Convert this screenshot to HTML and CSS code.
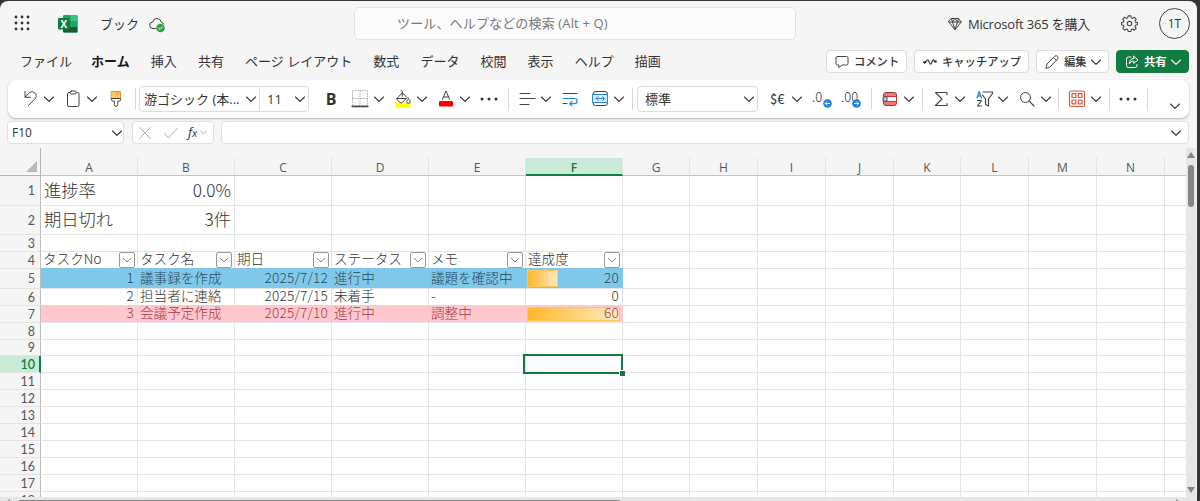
FILE: index.html
```html
<!DOCTYPE html>
<html lang="ja">
<head>
    <meta charset="UTF-8">
    <meta name="viewport" content="width=device-width, initial-scale=1.0">
    <title>ブック</title>
    <link rel="stylesheet" href="styles.css">
</head>
<body>

    <svg class="defs">
        <symbol id="chev" viewBox="0 0 12 12"><path d="M1.5 4 6 8.3 10.5 4"/></symbol>
        <symbol id="dots" viewBox="0 0 20 20"><g fill="#333" stroke="none"><circle cx="3" cy="10" r="1.5"/><circle cx="10" cy="10" r="1.5"/><circle cx="17" cy="10" r="1.5"/></g></symbol>
    </svg>

    <div class="app">
        <header class="titlebar">
            <svg class="waffle" viewBox="0 0 16 16">
                <g fill="#333" stroke="none">
                    <circle cx="2" cy="2" r="1.4"/><circle cx="8" cy="2" r="1.4"/><circle cx="14" cy="2" r="1.4"/>
                    <circle cx="2" cy="8" r="1.4"/><circle cx="8" cy="8" r="1.4"/><circle cx="14" cy="8" r="1.4"/>
                    <circle cx="2" cy="14" r="1.4"/><circle cx="8" cy="14" r="1.4"/><circle cx="14" cy="14" r="1.4"/>
                </g>
            </svg>
            <div class="logo">
                <svg viewBox="0 0 20 18">
                    <g stroke="none">
                        <rect x="5" y="0" width="14.5" height="17.5" rx="1.2" fill="#21a366"/>
                        <path d="M12.5 0h5.8q1.2 0 1.2 1.2V6h-7z" fill="#33c481"/>
                        <path d="M5 6h7.5v6H5z" fill="#107c41"/>
                        <path d="M12.5 6h7v6h-7z" fill="#21a366"/>
                        <path d="M5 12h14.5v4.3q0 1.2-1.2 1.2H6.2Q5 17.5 5 16.3z" fill="#185c37"/>
                        <rect x="0" y="3" width="11.5" height="11.5" rx="1.1" fill="#107c41"/>
                    </g>
                </svg>
                <b>X</b>
            </div>
            <span class="book">ブック</span>
            <svg class="cloud" viewBox="0 0 17 16">
                <path d="M6.5 11.5H4a3.2 3.2 0 0 1-.3-6.400 4.300 4.300 0 0 1 8.500 0 3.200 3.200 0 0 1 2.600 2"/>
                <circle cx="11.500" cy="11" r="4.300" fill="#2ba34a" stroke="none"/>
                <path d="m9.600 11 1.400 1.400 2.500-2.600" stroke="#fff"/>
            </svg>
            <div class="search">ツール、ヘルプなどの検索 (Alt + Q)</div>
            <svg class="gem" viewBox="0 0 14 14"><path d="M3.500 1.500h7L13.200 5 7 12.800.8 5zM.8 5h12.400M4.500 5 7 12.500 9.500 5M3.500 1.500l1 3.500L7 1.500 9.500 5l1-3.500"/></svg>
            <span class="buy">Microsoft 365 を購入</span>
            <svg class="gear" viewBox="0 0 16 16">
                <path d="M6.700.8h2.600l.4 1.900 1.200.5 1.600-1.100 1.800 1.800-1.100 1.600.5 1.200 1.800.4v2.100l-1.800.5-.5 1.200 1.100 1.600-1.800 1.800-1.600-1.100-1.200.5-.4 1.800H6.700l-.4-1.800-1.200-.5-1.600 1.100-1.800-1.800 1.100-1.600-.5-1.200L.5 9.200V7.100l1.800-.4.5-1.200-1.100-1.600 1.800-1.800 1.600 1.100 1.200-.5z"/>
                <circle cx="8" cy="8.100" r="2.100"/>
            </svg>
            <div class="avatar">1T</div>
        </header>

        <nav class="tabs">
            <span>ファイル</span>
            <span class="active">ホーム</span>
            <span>挿入</span>
            <span>共有</span>
            <span>ページ レイアウト</span>
            <span>数式</span>
            <span>データ</span>
            <span>校閲</span>
            <span>表示</span>
            <span>ヘルプ</span>
            <span>描画</span>
            <div class="actions">
                <button class="comment"><svg viewBox="0 0 14 14"><path d="M2.500 1.500h9a1.500 1.500 0 0 1 1.500 1.500v5.500a1.500 1.500 0 0 1-1.500 1.500H7l-3.200 2.600V10H2.500A1.500 1.500 0 0 1 1 8.500V3a1.500 1.500 0 0 1 1.500-1.500z"/></svg>コメント</button>
                <button class="catchup"><svg viewBox="0 0 14 14"><path d="M1.500 7.500c1.500.5 2-3 3.300-2.600S6.300 9.400 7.600 9.200 9 4.800 10.300 5s1 2 2.200 1.600" stroke-width="1.300"/><circle cx="1.600" cy="7.300" r="1.400" fill="#333" stroke="none"/><circle cx="12.600" cy="6.500" r="1.200" fill="#333" stroke="none"/></svg>キャッチアップ</button>
                <button class="edit"><svg viewBox="0 0 14 14"><path d="m1 13 1-4L9.700 1.300a1.700 1.700 0 0 1 2.800 2.800L5 12zM8.500 2.700l2.700 2.700"/></svg>編集<svg class="chev"><use href="#chev"/></svg></button>
                <button class="share"><svg viewBox="0 0 14 14"><path d="M6 2H3.500A2 2 0 0 0 1.500 4v6.500a2 2 0 0 0 2 2H10a2 2 0 0 0 2-2V9.500"/><path d="M8.700 1.200 13 4.800 8.700 8.300V6.200C6.500 6.200 5.300 7 4.300 9c0-3 1.500-5.300 4.400-5.600z"/></svg>共有<svg class="chev"><use href="#chev"/></svg></button>
            </div>
        </nav>

        <div class="ribbon">
            <div class="group g-clip">
                <svg class="ic" viewBox="0 0 20 20"><path d="M5 2.500v5.800h5.500M5.300 8 8.700 4.300c3-3 6.700-1 7.300 1.500.5 2-.5 3.700-2 5L8.500 16.500"/></svg>
                <svg class="chev"><use href="#chev"/></svg>
                <svg class="ic" viewBox="0 0 20 20"><rect x="4.500" y="3.500" width="11.500" height="14" rx="1.500"/><rect x="7.200" y="2" width="6" height="3" rx="1.200" fill="#fff"/></svg>
                <svg class="chev"><use href="#chev"/></svg>
                <svg class="ic" viewBox="0 0 20 20"><path d="M5.500 2.500h9v7h-9z" fill="#ffc65c" stroke="#e8912d"/><path d="M11 2.500v3M13 2.500v2" stroke="#e8912d"/><path d="M5.500 9.500h9v1.200q0 1.500-1.500 1.500h-1.200v3.500a1.600 1.600 0 0 1-3.400 0v-3.500H7q-1.500 0-1.500-1.500z" fill="#fff"/></svg>
            </div>
            <div class="group g-font">
                <div class="box fontname">游ゴシック (本...<svg class="chev"><use href="#chev"/></svg></div>
                <div class="box fontsize">11<svg class="chev"><use href="#chev"/></svg></div>
                <b class="bold">B</b>
                <svg class="ic" viewBox="0 0 20 20"><path d="M2.500 1.500h15v15h-15zM10 1.500v15M2.500 9.500h15" stroke="#aaa" stroke-linecap="butt" stroke-dasharray="1.500 1"/><path d="M2 17.500h16" stroke-width="1.300"/></svg>
                <svg class="chev"><use href="#chev"/></svg>
                <svg class="ic" viewBox="0 0 20 20"><path d="M2.500 13.500h15v4.500h-15z" fill="#ffff00" stroke="none"/><path d="m4 9.300 5.300-5.500 4.800 4.800-5 5q-.9.700-1.800 0L4 10.500q-.5-.6 0-1.200zM4 9.500h9.500M9.300 7V2.500q0-1-1.200-1M15.500 9.500c-1 1.500-1.700 2.300-1.700 3.200a1.700 1.700 0 0 0 3.400 0c0-.9-.7-1.700-1.700-3.200z" fill="#fff"/></svg>
                <svg class="chev"><use href="#chev"/></svg>
                <svg class="ic" viewBox="0 0 20 20"><rect x="3" y="12" width="14" height="5.500" rx="1" fill="#f00" stroke="none"/><path d="M6.300 10.500 10 2l3.700 8.500M7.500 8h5"/></svg>
                <svg class="chev"><use href="#chev"/></svg>
                <svg class="ic"><use href="#dots"/></svg>
            </div>
            <div class="group g-align">
                <svg class="ic" viewBox="0 0 20 20"><path d="M3 4.500h10M3 9.500h15M3 15.500h9"/></svg>
                <svg class="chev"><use href="#chev"/></svg>
                <svg class="ic" viewBox="0 0 20 20"><path d="M3 4.500h14M3 14.500h4"/><path d="M3 9.500h11.500a2.600 2.600 0 0 1 0 5.200H10M12 12.500l-2.300 2.200L12 16.900" stroke="#2b88d8" stroke-width="1.200"/></svg>
                <svg class="ic merge" viewBox="0 0 20 20"><rect x="3" y="2.500" width="14.500" height="14" rx="2.500"/><rect x="3" y="5.500" width="14.500" height="8" fill="#d9ecfa" stroke="#2b88d8"/><path d="M6 9.500h8.500M8 7.500l-2 2 2 2M12.500 7.500l2 2-2 2" stroke="#2b88d8"/></svg>
                <svg class="chev"><use href="#chev"/></svg>
            </div>
            <div class="group g-number">
                <div class="box format">標準<svg class="chev"><use href="#chev"/></svg></div>
                <span class="money">$€</span>
                <svg class="chev"><use href="#chev"/></svg>
                <span class="dec">.0<svg viewBox="0 0 10 10"><circle cx="5" cy="5" r="4.800" fill="#1b84cf" stroke="none"/><path d="M7.500 5h-5M4.500 3l-2 2 2 2" stroke="#fff"/></svg></span>
                <span class="dec">.00<svg viewBox="0 0 10 10"><circle cx="5" cy="5" r="4.800" fill="#1b84cf" stroke="none"/><path d="M2.500 5h5M5.500 3l2 2-2 2" stroke="#fff"/></svg></span>
            </div>
            <div class="group g-table">
                <svg class="ic" viewBox="0 0 20 20"><rect x="3.500" y="3.500" width="13" height="13" rx="2.500" fill="#f4777b" stroke="#7d4244"/><path d="M4 7.500h12.500v5H4z" fill="#fff" stroke="#d13438"/><path d="M3.500 8H7v4H3.500z" fill="#b8dcf7" stroke="#555"/></svg>
                <svg class="chev"><use href="#chev"/></svg>
            </div>
            <div class="group g-edit">
                <svg class="ic" viewBox="0 0 20 20"><path d="M16 5.500V3.500H4.500L11 10l-6.500 6.500H16v-2" stroke-width="1.200"/></svg>
                <svg class="chev"><use href="#chev"/></svg>
                <svg class="ic sort" viewBox="0 0 20 20"><path d="M3 9 5.200 2.500 7.400 9M3.700 7h3" stroke="#2b88d8" stroke-width="1.300"/><path d="M3.500 11.500h4L3.500 17h4.200M9 3h9.500v1.500l-4 5.500v7l-3-1.500V10L8.500 6" stroke-width="1.200"/></svg>
                <svg class="chev"><use href="#chev"/></svg>
                <svg class="ic" viewBox="0 0 20 20"><circle cx="8.500" cy="8.500" r="5"/><path d="m12.200 12.200 4.800 4.800" stroke-width="1.200"/></svg>
                <svg class="chev"><use href="#chev"/></svg>
            </div>
            <div class="group g-addin">
                <svg class="ic" viewBox="0 0 20 20"><g stroke="#d9583b" stroke-width="1.200"><rect x="2.500" y="2" width="15" height="15.500" rx="1.800"/><rect x="5" y="4.700" width="3.800" height="3.800"/><rect x="11.200" y="4.700" width="3.800" height="3.800"/><rect x="5" y="11" width="3.800" height="3.800"/><rect x="11.200" y="11" width="3.800" height="3.800"/></g></svg>
                <svg class="chev"><use href="#chev"/></svg>
            </div>
            <div class="group g-more">
                <svg class="ic"><use href="#dots"/></svg>
            </div>
            <svg class="chev collapse"><use href="#chev"/></svg>
        </div>

        <div class="formula-bar">
            <div class="field namebox">F10<svg class="chev"><use href="#chev"/></svg></div>
            <div class="field fx">
                <svg viewBox="0 0 14 14"><path d="m1.500 1.500 11 11M12.500 1.500l-11 11" stroke="#b0b0b0"/></svg>
                <svg class="ok" viewBox="0 0 16 14"><path d="m1.500 7.500 4 4.500 9-10" stroke="#b0b0b0"/></svg>
                <i>f<small>x</small></i>
                <svg class="tiny" viewBox="0 0 12 12"><use href="#chev"/></svg>
            </div>
            <div class="field formula"><svg class="chev"><use href="#chev"/></svg></div>
        </div>

        <div class="sheet-area">
            <div class="sheet" id="sheet"></div>
            <div class="vscroll">
                <svg viewBox="0 0 10 10"><path d="M1 8h8L5 2z"/></svg>
                <div class="thumb"></div>
                <svg class="down" viewBox="0 0 10 10"><path d="M1 2h8L5 8z"/></svg>
            </div>
        </div>
        <div class="hscroll">
            <svg viewBox="0 0 6 8"><path d="M5 0v8L0 4z"/></svg>
            <div class="thumb"></div>
            <svg class="right" viewBox="0 0 6 8"><path d="M1 0v8l5-4z"/></svg>
        </div>
    </div>

    <script src="sheet.js"></script>
</body>
</html>
```
FILE: styles.css
```css
/* ====== base ====== */
* {
    margin: 0;
    padding: 0;
    box-sizing: border-box;
}
body {
    background: #343434;
    color: #333;
    font-family: "Open Sans", "Noto Sans CJK JP", sans-serif;
    font-size: 13px;
    height: 501px;
    overflow: hidden;
}
svg {
    display: block;
    flex: none;
    fill: none;
    stroke: #444;
    stroke-width: 1;
    stroke-linecap: round;
    stroke-linejoin: round;
}
.defs {
    display: none;
}
.app {
    width: 1197px;
    height: 500px;
    margin-top: 1px;
    background: #f5f5f5;
    border-radius: 8px 8px 0 0;
    overflow: hidden;
    display: flex;
    flex-direction: column;
}
.chev {
    width: 12px;
    height: 12px;
    stroke: #333;
    stroke-width: 1.1;
}

/* ====== title bar ====== */
.titlebar {
    flex: none;
    height: 46px;
    display: flex;
    align-items: center;
    padding: 0 7px 0 14px;
}
.waffle {
    width: 16px;
    height: 16px;
    margin-top: -2px;
}
.logo {
    display: grid;
    width: 20px;
    height: 18px;
    margin-left: 28px;
}
.logo svg, .logo b {
    grid-area: 1 / 1;
}
.logo b {
    color: #fff;
    font-size: 10px;
    line-height: 18px;
    padding-left: 2.5px;
}
.book {
    margin-left: 22px;
    margin-top: -2px;
    width: 39px;
}
.cloud {
    width: 17px;
    height: 16px;
    margin-left: 10px;
    margin-top: 2px;
}
.search {
    width: 442px;
    height: 33px;
    margin-left: 188px;
    margin-top: -1px;
    padding-left: 42px;
    line-height: 31px;
    letter-spacing: 0.15px;
    color: #777;
    background: #fbfbfb;
    border: 1px solid #e2e2e2;
    border-radius: 5px;
}
.gem {
    width: 14px;
    height: 14px;
    margin-left: auto;
    margin-top: -1px;
}
.buy {
    margin-left: 6px;
    margin-top: -2px;
    width: 124px;
    letter-spacing: -0.2px;
    white-space: nowrap;
}
.gear {
    width: 17px;
    height: 17px;
    margin-left: 29px;
    margin-top: -1px;
}
.avatar {
    width: 31px;
    height: 31px;
    margin-left: 21px;
    margin-top: -1px;
    border: 1px solid #444;
    border-radius: 50%;
    text-align: center;
    line-height: 29px;
    font-size: 12px;
}

/* ====== tabs ====== */
.tabs {
    flex: none;
    height: 30px;
    display: flex;
    align-items: center;
    gap: 21.1px;
    padding: 0 8px 0 20px;
    white-space: nowrap;
}
.tabs > span {
    margin-top: -3px;
}
.tabs .active {
    font-weight: bold;
    color: #1a1a1a;
    margin-left: -2px;
}
.actions {
    margin-left: auto;
    margin-top: -1px;
    display: flex;
    gap: 7px;
}
.actions button {
    height: 23px;
    display: flex;
    align-items: center;
    gap: 5px;
    padding-left: 8px;
    background: #fff;
    border: 1px solid #dcdcdc;
    border-radius: 4px;
    color: #333;
    font-family: inherit;
    font-size: 11.3px;
    font-weight: 500;
    line-height: 20px;
    white-space: nowrap;
}
.actions button svg {
    width: 14px;
    height: 14px;
}
.actions button .chev {
    width: 12px;
    height: 12px;
    margin-left: -2px;
}
.comment { width: 81px; }
.catchup { width: 115px; }
.edit { width: 73px; }
.actions .share {
    width: 73px;
    background: #107c41;
    border-color: #107c41;
    color: #fff;
    font-weight: bold;
}
.actions .share svg {
    stroke: #fff;
}

/* ====== ribbon ====== */
.ribbon {
    flex: none;
    height: 38px;
    width: 1181px;
    margin: 3px 0 0 8px;
    background: #fff;
    border-radius: 8px;
    box-shadow: 0 1px 2px rgba(0, 0, 0, 0.28);
    display: flex;
    align-items: center;
}
.group {
    flex: none;
    height: 22px;
    display: flex;
    align-items: center;
    border-right: 1px solid #d6d6d6;
}
.ic {
    width: 20px;
    height: 20px;
    margin-left: 8px;
}
.group > .chev {
    margin-left: 3px;
}
.g-clip { width: 128px; padding-left: 4px; }
.g-font { width: 373px; padding-left: 3px; }
.g-align { width: 124px; }
.g-number { width: 239px; padding-left: 4px; }
.g-table { width: 51px; }
.g-edit { width: 136px; }
.g-addin { width: 51px; }
.g-more { width: 38px; }
.merge {
    margin-left: 10px;
}
.collapse {
    margin: 13px 8px 0 auto;
}
.box {
    height: 26px;
    flex: none;
    display: flex;
    align-items: center;
    justify-content: space-between;
    border: 1px solid #dcdcdc;
    border-radius: 4px;
    padding: 0 2px 0 4px;
    line-height: 20px;
    white-space: nowrap;
}
.fontname {
    width: 121px;
    border-radius: 4px 0 0 4px;
}
.fontsize {
    width: 49px;
    padding-left: 7px;
    border-left: none;
    border-radius: 0 4px 4px 0;
}
.format {
    width: 121px;
    padding-left: 7px;
}
.bold {
    width: 20px;
    margin-left: 12px;
    margin-right: 1px;
    text-align: center;
    font-size: 16px;
    line-height: 20px;
}
.money {
    width: 18px;
    margin-left: 12px;
    font-family: "Noto Sans CJK JP", sans-serif;
    font-size: 13px;
    line-height: 18px;
}
.dec {
    position: relative;
    width: 20px;
    height: 20px;
    margin-left: 9px;
    line-height: 16px;
    font-family: "Noto Sans CJK JP", sans-serif;
    font-size: 13px;
    font-weight: 300;
}
.dec svg {
    position: absolute;
    right: 0;
    bottom: 1px;
    width: 9px;
    height: 9px;
}

/* ====== formula bar ====== */
.formula-bar {
    flex: none;
    height: 23px;
    margin: 3px 8px 0 7px;
    display: flex;
}
.field {
    display: flex;
    align-items: center;
    background: #fff;
    border: 1px solid #e0e0e0;
    border-radius: 4px;
}
.namebox {
    width: 117px;
    padding: 0 0 0 4px;
    justify-content: space-between;
    font-size: 12px;
}
.fx {
    width: 82px;
    margin-left: 8px;
    padding-left: 5px;
}
.fx svg {
    width: 14px;
    height: 14px;
}
.fx .ok {
    width: 16px;
    margin-left: 11px;
}
.fx i {
    margin-left: 9px;
    font-size: 13px;
    line-height: 18px;
}
.fx .tiny {
    width: 7px;
    height: 7px;
    margin-left: 3px;
    stroke: #999;
    stroke-width: 1.5;
}
.formula {
    flex: 1;
    margin-left: 7px;
    padding-right: 6px;
    justify-content: flex-end;
}

/* ====== sheet ====== */
.sheet-area {
    flex: none;
    height: 349px;
    margin-top: 4px;
    display: flex;
    overflow: hidden;
}
.sheet {
    width: 1186px;
    font-family: "Noto Sans CJK JP", sans-serif;
}
.row {
    display: grid;
    grid-template-columns: 41px repeat(6, 97px) 67px 68px 68px 68px 67px 68px 68px 68px 21px;
    grid-template-rows: 100%;
    height: 17px;
    background: #fff;
}
.cell {
    display: flex;
    align-items: center;
    min-width: 0;
    min-height: 0;
    border-right: 1px solid #e4e4e4;
    border-bottom: 1px solid #e4e4e4;
    padding: 0 3px 0 2px;
    font-size: 13.6px;
    font-weight: 300;
    line-height: 14px;
    white-space: nowrap;
}
.cell:last-child {
    border-right: none;
}
.cell span {
    margin-bottom: 4px;
}
.num {
    justify-content: flex-end;
    letter-spacing: 0.2px;
}
.row-no {
    justify-content: flex-end;
    padding: 1px 5px 0 0;
    background: #f5f5f5;
    border-right-color: #bdbdbd;
    color: #555;
    font-family: Lato, sans-serif;
    font-size: 12.5px;
    font-weight: 400;
}
.row.head {
    height: 28px;
    background: #f5f5f5;
}
.head .cell {
    margin-top: 10px;
    justify-content: center;
    font-family: "Open Sans", sans-serif;
    font-size: 12px;
    font-weight: 400;
    color: #555;
    padding: 2px 0 0;
    border-bottom-color: #c4c4c4;
}
.head .corner {
    margin-top: 0;
    justify-content: flex-end;
    align-items: flex-end;
    padding: 0 3px 3px 0;
    border-right: 1px solid #b5b5b5;
    border-bottom: 1px solid #b5b5b5;
}
.corner::after {
    content: "";
    border-left: 11px solid transparent;
    border-bottom: 11px solid #b8b8b8;
}
.head .cell.on {
    background: #c9ead6;
    color: #107c41;
    font-weight: 600;
    padding-top: 3px;
    border-bottom: 2px solid #107c41;
}
.row-no.on {
    background: #c9ead6;
    color: #107c41;
    font-weight: 600;
    border-right: 2px solid #107c41;
    padding-right: 4px;
}
.r1 { height: 30px; }
.r2 { height: 29px; }
.r5 { height: 20px; }
.r9 { height: 16px; }
.r1 .cell:not(.row-no), .r2 .cell:not(.row-no) {
    padding-left: 3px;
    font-size: 17.3px;
    letter-spacing: 0;
}
.r1 .cell span, .r2 .cell span {
    margin-bottom: 2px;
}
.r4 .cell:not(.row-no) {
    justify-content: space-between;
}
.r5 .fill {
    background: #80c8ea;
    border-right-color: #80c8ea;
    box-shadow: 0 -1px #80c8ea;
    color: #25495c;
}
.r7 .fill {
    background: #ffc7ce;
    border-right-color: #ffc7ce;
    box-shadow: 0 -1px #ffc7ce;
    color: #a8384a;
}
.filter {
    flex: none;
    width: 16px;
    height: 16px;
    margin-top: -1px;
    margin-right: -1px;
    border: 1px solid #999;
    border-radius: 2px;
    background: #fff;
    display: grid;
    place-items: center;
}
.filter svg {
    width: 10px;
    height: 10px;
    stroke: #777;
    stroke-width: 1.1;
}

/* data bar sits under the number */
.meter {
    position: relative;
}
.meter .bar {
    position: absolute;
    left: 1px;
    top: 1px;
    bottom: 1px;
    background: linear-gradient(90deg, #ffb628, #ffeac4);
    border: 1px solid #ffc65a;
}
.meter span {
    position: relative;
}
.selected {
    position: relative;
}
.selected::before {
    content: "";
    position: absolute;
    left: -3px;
    top: -2px;
    right: -1px;
    bottom: -2px;
    border: 2px solid #107c41;
}
.selected::after {
    content: "";
    position: absolute;
    right: -3px;
    bottom: -4px;
    width: 5px;
    height: 5px;
    background: #107c41;
    border: solid #fff;
    border-width: 1px 0 0 1px;
}

/* ====== scrollbars ====== */
.vscroll {
    width: 10px;
    background: #e6e6e6;
    display: flex;
    flex-direction: column;
    align-items: center;
}
.vscroll svg {
    width: 10px;
    height: 10px;
    margin-top: 2px;
    fill: #858585;
    stroke: none;
}
.vscroll .thumb {
    width: 6px;
    height: 42px;
    margin-top: 5px;
    background: #858585;
    border-radius: 3px;
}
.vscroll .down {
    margin-top: auto;
    margin-bottom: 2px;
}
.hscroll {
    flex: none;
    height: 12px;
    background: #e6e6e6;
    padding: 3px 16px 0 5px;
    display: flex;
}
.hscroll svg {
    width: 6px;
    height: 8px;
    margin-top: -1px;
    fill: #858585;
    stroke: none;
}
.hscroll .thumb {
    width: 603px;
    height: 6px;
    margin-left: 7px;
    background: #858585;
    border-radius: 3px;
}
.hscroll .right {
    margin-left: auto;
}
```
FILE: sheet.js
```js
const letters = ["A", "B", "C", "D", "E", "F", "G", "H", "I", "J", "K", "L", "M", "N", ""];

const rows = {
    1: ["進捗率", "0.0%"],
    2: ["期日切れ", "3件"],
    4: ["タスクNo", "タスク名", "期日", "ステータス", "メモ", "達成度"],
    5: [1, "議事録を作成", "2025/7/12", "進行中", "議題を確認中", 20],
    6: [2, "担当者に連絡", "2025/7/15", "未着手", "-", 0],
    7: [3, "会議予定作成", "2025/7/10", "進行中", "調整中", 60]
};
const maxValue = 60;

function addCell(row, cls, html) {
    const cell = document.createElement("div");
    cell.className = "cell " + cls;
    cell.innerHTML = html;
    row.appendChild(cell);
}

function addRow(cls) {
    const row = document.createElement("div");
    row.className = "row " + cls;
    document.getElementById("sheet").appendChild(row);
    return row;
}

const head = addRow("head");
addCell(head, "corner", "");
letters.forEach(l => addCell(head, l === "F" ? "on" : "", l));

for (let r = 1; r <= 18; r++) {
    const row = addRow("r" + r);
    addCell(row, r === 10 ? "row-no on" : "row-no", r);

    letters.forEach((l, c) => {
        const value = (rows[r] || [])[c];
        let cls = "";
        let html = value === undefined ? "" : `<span>${value}</span>`;

        if (r === 4 && c < 6) {
            html += '<div class="filter"><svg viewBox="0 0 12 12"><use href="#chev"/></svg></div>';
        }
        if (/^\d/.test(value)) cls += " num";
        if ((r === 5 || r === 7) && c < 6) cls += " fill";
        if (r > 4 && l === "F" && value) {
            cls += " meter";
            html = `<div class="bar" style="width: ${value / maxValue * 93}px"></div>` + html;
        }
        if (r === 10 && l === "F") cls += " selected";
        addCell(row, cls, html);
    });
}
```
